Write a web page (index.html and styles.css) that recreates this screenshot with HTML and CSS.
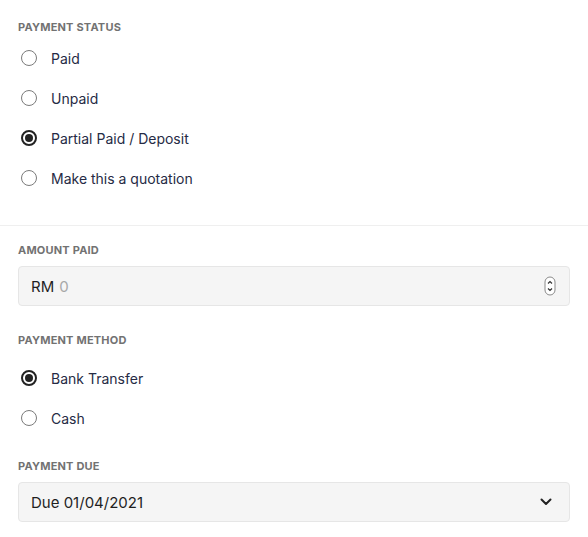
FILE: index.html
```html
<!DOCTYPE html>
<html>
<head>
<meta charset="utf-8">
<link rel="stylesheet" href="styles.css">
</head>
<body>
<section class="section section-status">
  <div class="label">Payment Status</div>
  <div class="radios">
    <label class="radio"><span class="dot"></span><span class="radio-text">Paid</span></label>
    <label class="radio"><span class="dot"></span><span class="radio-text">Unpaid</span></label>
    <label class="radio"><span class="dot checked"></span><span class="radio-text">Partial Paid / Deposit</span></label>
    <label class="radio"><span class="dot"></span><span class="radio-text">Make this a quotation</span></label>
  </div>
</section>
<section class="section section-details">
  <div class="label">Amount Paid</div>
  <div class="field">
    <span class="prefix">RM</span><span class="placeholder">0</span>
    <svg class="spinner" width="12" height="20" viewBox="0 0 12 20">
      <rect x="1" y="1" width="10" height="18" rx="5" fill="#fff" stroke="#8a8a8a" stroke-width="1"/>
      <path d="M4 7.5 L6 5.5 L8 7.5" fill="none" stroke="#333" stroke-width="1.2"/>
      <path d="M4 12.5 L6 14.5 L8 12.5" fill="none" stroke="#333" stroke-width="1.2"/>
    </svg>
  </div>
  <div class="label label-method">Payment Method</div>
  <div class="radios radios-method">
    <label class="radio"><span class="dot checked"></span><span class="radio-text">Bank Transfer</span></label>
    <label class="radio"><span class="dot"></span><span class="radio-text">Cash</span></label>
  </div>
  <div class="label label-due">Payment Due</div>
  <div class="field select">
    <span class="value">Due 01/04/2021</span>
    <svg class="chevron" width="12" height="8" viewBox="0 0 12 8">
      <path d="M1.5 1.5 L6 6 L10.5 1.5" fill="none" stroke="#222" stroke-width="2" stroke-linecap="round" stroke-linejoin="round"/>
    </svg>
  </div>
</section>
</body>
</html>
```
FILE: styles.css
```css
html, body {
  margin: 0;
  padding: 0;
  background: #ffffff;
}
body {
  font-family: Inter, "Noto Sans", sans-serif;
  color: #262b45;
  width: 588px;
}
.section {
  padding: 0 18px 0 18px;
}
.section-status {
  padding-top: 19px;
  padding-bottom: 27px;
  border-bottom: 1px solid #efefef;
}
.section-details {
  padding-top: 16px;
}
.label {
  font-size: 11px;
  line-height: 16px;
  font-weight: 700;
  text-transform: uppercase;
  color: #727272;
  letter-spacing: 0.2px;
}
.radios {
  display: flex;
  flex-direction: column;
  margin-top: 3px;
}
.radios-method {
  margin-top: 10px;
}
.radio {
  display: flex;
  align-items: center;
  height: 40px;
  gap: 14px;
  padding-left: 3px;
  font-size: 14px;
  color: #262b45;
}
.dot {
  box-sizing: border-box;
  width: 16px;
  height: 16px;
  border-radius: 50%;
  border: 1.5px solid #7b7b7b;
  background: #fff;
  display: flex;
  align-items: center;
  justify-content: center;
}
.dot.checked {
  border: 2px solid #222;
}
.dot.checked::after {
  content: "";
  width: 8px;
  height: 8px;
  border-radius: 50%;
  background: #222;
}
.field {
  box-sizing: border-box;
  margin-top: 8px;
  height: 40px;
  background: #f5f5f5;
  border: 1px solid #e6e6e6;
  border-radius: 4px;
  display: flex;
  align-items: center;
  padding: 0 12px;
  font-size: 15px;
  color: #1f1f1f;
}
.prefix {
  margin-right: 5px;
}
.placeholder {
  color: #a8a8a8;
  flex: 1;
}
.spinner {
  margin-right: 1px;
}
.label-method {
  margin-top: 26px;
}
.label-due {
  margin-top: 20px;
}
.select .value {
  flex: 1;
}
.chevron {
  margin-right: 5px;
}
```
